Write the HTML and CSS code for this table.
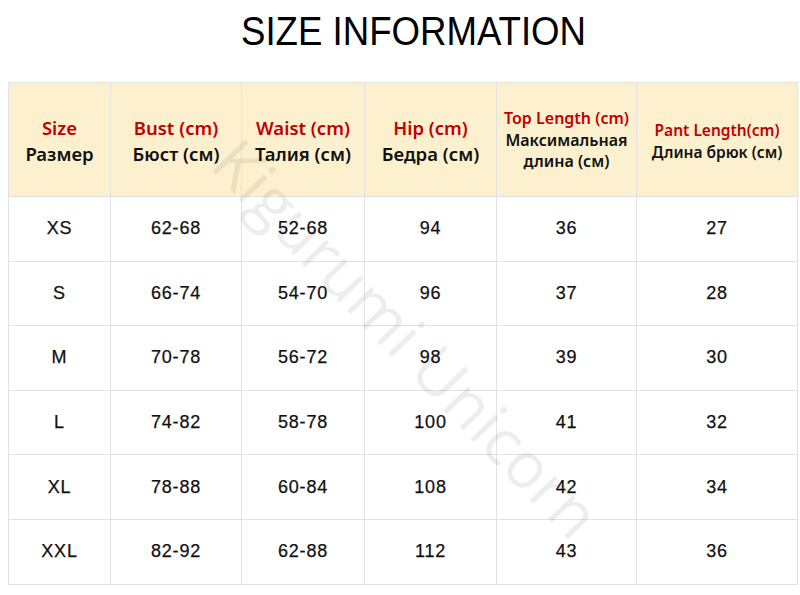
FILE: index.html
```html
<!DOCTYPE html>
<html lang="en">
<head>
<meta charset="utf-8">
<title>Size Information</title>
<link rel="stylesheet" href="styles.css">
</head>
<body>
<div class="page">
  <h1 class="title"><span class="title-text">SIZE INFORMATION</span></h1>
  <div class="table-wrap">
    <table class="sizes">
      <colgroup>
        <col class="c1"><col class="c2"><col class="c3"><col class="c4"><col class="c5"><col class="c6">
      </colgroup>
      <thead>
        <tr>
          <th><span class="en">Size</span><span class="ru">Размер</span></th>
          <th><span class="en">Bust (cm)</span><span class="ru">Бюст (см)</span></th>
          <th><span class="en">Waist (cm)</span><span class="ru">Талия (см)</span></th>
          <th><span class="en">Hip (cm)</span><span class="ru">Бедра (см)</span></th>
          <th class="small"><span class="en">Top Length (cm)</span><span class="ru">Максимальная<br>длина (см)</span></th>
          <th class="smaller"><span class="en">Pant Length(cm)</span><span class="ru">Длина брюк (см)</span></th>
        </tr>
      </thead>
      <tbody>
        <tr><td>XS</td><td>62-68</td><td>52-68</td><td>94</td><td>36</td><td>27</td></tr>
        <tr><td>S</td><td>66-74</td><td>54-70</td><td>96</td><td>37</td><td>28</td></tr>
        <tr><td>M</td><td>70-78</td><td>56-72</td><td>98</td><td>39</td><td>30</td></tr>
        <tr><td>L</td><td>74-82</td><td>58-78</td><td>100</td><td>41</td><td>32</td></tr>
        <tr><td>XL</td><td>78-88</td><td>60-84</td><td>108</td><td>42</td><td>34</td></tr>
        <tr><td>XXL</td><td>82-92</td><td>62-88</td><td>112</td><td>43</td><td>36</td></tr>
      </tbody>
    </table>
    <div class="watermark">Kigurumi Unicorn</div>
  </div>
</div>
</body>
</html>
```

FILE: styles.css
```css
html, body {
  margin: 0;
  padding: 0;
  background: #ffffff;
}

.page {
  width: 800px;
  height: 595px;
  padding: 0 3px 0 8px;
  box-sizing: border-box;
  font-family: "Liberation Sans", Arial, sans-serif;
  color: #111111;
  overflow: hidden;
}

.title {
  margin: 0;
  height: 82px;
  display: flex;
  justify-content: center;
  padding: 11px 0 0 23px;
  box-sizing: border-box;
  font-weight: normal;
  font-size: 40px;
  line-height: 40px;
}

.title-text {
  display: inline-block;
  transform: scaleX(0.915);
  transform-origin: center top;
  color: #000;
}

.table-wrap {
  position: relative;
}

.sizes {
  width: 789px;
  border-collapse: collapse;
  table-layout: fixed;
}

.c1 { width: 102px; }
.c2 { width: 131px; }
.c3 { width: 123px; }
.c4 { width: 132px; }
.c5 { width: 140px; }
.c6 { width: 161px; }

.sizes th,
.sizes td {
  border: 1px solid #e2e2e2;
  text-align: center;
  vertical-align: middle;
  padding: 0;
}

.sizes th {
  background: #fdf0cf;
  height: 111px;
  font-family: "Noto Sans", "Liberation Sans", sans-serif;
  font-weight: 600;
  font-size: 18.5px;
  line-height: 26px;
  padding-top: 2px;
}

.sizes th .en,
.sizes th .ru {
  display: block;
  white-space: nowrap;
}

.sizes th .en {
  color: #c00000;
}

.sizes th .ru {
  color: #111;
}

.sizes th.small {
  font-size: 16px;
  line-height: 21.5px;
  padding-top: 2px;
  padding-bottom: 0;
}

.sizes th.smaller {
  font-size: 15.5px;
  line-height: 22px;
}

.sizes td {
  height: 63.6px;
  font-size: 18px;
  letter-spacing: 0.8px;
  color: #111;
  -webkit-text-stroke: 0.25px #111;
}

.watermark {
  position: absolute;
  left: 119px;
  top: 224px;
  width: 560px;
  text-align: center;
  font-family: "Open Sans", "Liberation Sans", sans-serif;
  font-weight: 400;
  font-size: 64px;
  line-height: 64px;
  color: rgba(0, 0, 0, 0.07);
  transform: rotate(46deg);
  transform-origin: center center;
  pointer-events: none;
  white-space: nowrap;
}
```
